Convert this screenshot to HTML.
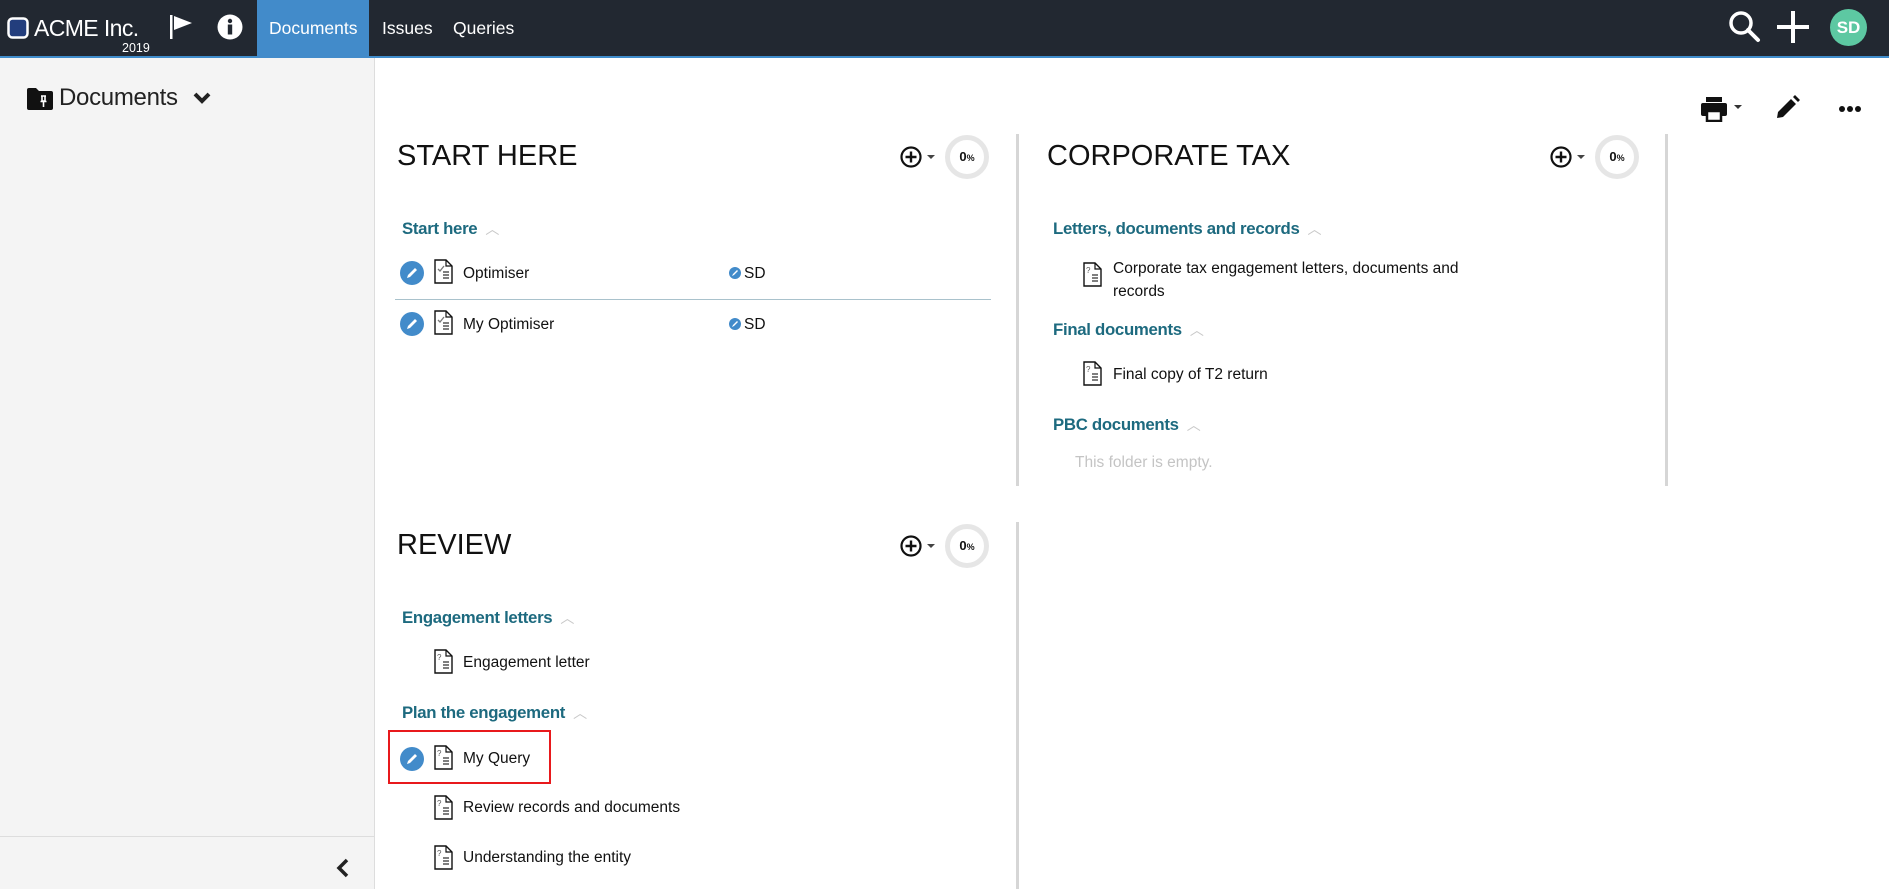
<!DOCTYPE html>
<html><head><meta charset="utf-8"><style>
*{margin:0;padding:0;box-sizing:border-box}
body{width:1889px;height:889px;overflow:hidden;font-family:"Liberation Sans",sans-serif;background:#fff;position:relative;color:#111}
.a{position:absolute;white-space:nowrap}
.nav{position:absolute;left:0;top:0;width:1889px;height:58px;background:#222831;border-bottom:2px solid #3f8ccb}
.side{position:absolute;left:0;top:58px;width:375px;height:831px;background:#f4f4f4;border-right:1px solid #ddd}
.h1{font-size:29px;color:#111;letter-spacing:0px}
.sec{font-size:16.8px;color:#1d6a7f;font-weight:bold;letter-spacing:-0.3px}
.sec .car{color:#c8c8c8;font-weight:normal;font-size:14px;margin-left:8px}
.it{font-size:15.5px;color:#111}
.vd{position:absolute;width:3px;background:#d6d6d6}
.prog{position:absolute;width:44px;height:44px;border-radius:50%;border:5px solid #e6e6e6;font-size:13px;font-weight:bold;text-align:center;line-height:34px}
.prog small{font-size:9px}
</style></head><body>
<div class="nav"></div>
<svg class="a" style="left:7px;top:17px" width="22" height="22"><rect x="1.5" y="1.5" width="19" height="19" rx="4" fill="#233e7d" stroke="#fff" stroke-width="2.5"/></svg>
<div class="a" style="left:34px;top:15px;font-size:23px;color:#fff;letter-spacing:-0.6px">ACME Inc.</div>
<div class="a" style="left:122px;top:41px;font-size:12.5px;color:#fff">2019</div>
<svg class="a" style="left:170px;top:13px" width="24" height="28"><rect x="0" y="2" width="2.5" height="24" fill="#fff"/><path d="M4 3 L22 10 L4 17Z" fill="#fff"/></svg>
<svg class="a" style="left:217px;top:14px" width="26" height="26"><circle cx="13" cy="13" r="12.5" fill="#fff"/><circle cx="13" cy="7" r="2.2" fill="#222831"/><rect x="10.8" y="10.5" width="4.4" height="10" fill="#222831"/></svg>
<div class="a" style="left:257px;top:0;width:112px;height:58px;background:#428bca"></div>
<div class="a" style="left:269px;top:18px;font-size:17.5px;color:#fff">Documents</div>
<div class="a" style="left:382px;top:18px;font-size:17.5px;color:#fff">Issues</div>
<div class="a" style="left:453px;top:18px;font-size:17.5px;color:#fff">Queries</div>
<svg class="a" style="left:1728px;top:10px" width="34" height="34"><circle cx="13" cy="13" r="10" fill="none" stroke="#fff" stroke-width="3.5"/><path d="M20 20 L30 30" stroke="#fff" stroke-width="4" stroke-linecap="round"/></svg>
<svg class="a" style="left:1777px;top:11px" width="32" height="32"><rect x="14" y="0" width="4" height="32" fill="#fff"/><rect x="0" y="14" width="32" height="4" fill="#fff"/></svg>
<div class="a" style="left:1830px;top:9px;width:37px;height:37px;border-radius:50%;background:#5dc8a2;color:#fff;font-weight:bold;font-size:17px;text-align:center;line-height:37px">SD</div>

<div class="side"></div>
<svg class="a" style="left:27px;top:88px" width="26" height="22"><path d="M0 2 Q0 0 2 0 L9 0 L12 3 L24 3 Q26 3 26 5 L26 20 Q26 22 24 22 L2 22 Q0 22 0 20Z" fill="#111"/><path d="M14 8 L19 8 M15 8 L15 13 L18 13 L18 8 M13.5 13.5 L19.5 13.5 M16.5 13.5 L16.5 19" stroke="#fff" stroke-width="1.6" fill="none"/></svg>
<div class="a" style="left:59px;top:84px;font-size:24px;color:#222;letter-spacing:-0.3px">Documents</div>
<svg class="a" style="left:193px;top:91px" width="18" height="14"><path d="M2 3 L9 10 L16 3" stroke="#222" stroke-width="4" fill="none"/></svg>
<div class="a" style="left:0;top:836px;width:375px;height:1px;background:#ddd"></div>
<svg class="a" style="left:336px;top:858px" width="14" height="20"><path d="M11 2 L3 10 L11 18" stroke="#222" stroke-width="3.5" fill="none"/></svg>

<svg class="a" style="left:1700px;top:96px" width="44" height="26"><rect x="6" y="1" width="16" height="5" fill="#111"/><rect x="1" y="7" width="26" height="13" rx="2" fill="#111"/><rect x="7" y="15" width="14" height="10" fill="#fff" stroke="#111" stroke-width="2.5"/><path d="M34 9 L42 9 L38 13Z" fill="#333"/></svg>
<svg class="a" style="left:1774px;top:95px" width="26" height="26"><path d="M3 23 L4 17 L17 4 L22 9 L9 22Z M19 2 L21 0 L26 5 L24 7Z" fill="#111"/></svg>
<svg class="a" style="left:1838px;top:105px" width="24" height="8"><circle cx="4" cy="4" r="3" fill="#111"/><circle cx="12" cy="4" r="3" fill="#111"/><circle cx="20" cy="4" r="3" fill="#111"/></svg>

<div class="vd" style="left:1016px;top:134px;height:352px"></div>
<div class="vd" style="left:1665px;top:134px;height:352px"></div>
<div class="vd" style="left:1016px;top:522px;height:367px"></div>

<div class="a h1" style="left:397px;top:140px">START HERE</div>
<div class="a h1" style="left:1047px;top:140px">CORPORATE TAX</div>
<div class="a h1" style="left:397px;top:529px">REVIEW</div>

<svg style="display:none"><defs>
<g id="pc"><circle cx="11" cy="11" r="9.5" fill="none" stroke="#111" stroke-width="2.2"/><path d="M11 5.5 V16.5 M5.5 11 H16.5" stroke="#111" stroke-width="2.4"/><path d="M27 9 L35 9 L31 13Z" fill="#444"/></g>
<g id="doc"><path d="M1 1 H12 L18 7 V24 H1Z" fill="#fff" stroke="#111" stroke-width="1.4"/><path d="M12 1 V7 H18" fill="none" stroke="#111" stroke-width="1.2"/><path d="M9 13 H15 M9 16 H15 M9 19 H15" stroke="#333" stroke-width="1.3"/></g>
<g id="ed"><circle cx="12" cy="12" r="12" fill="#428bca"/><path d="M7 17 L8 14 L15 7 L17 9 L10 16Z" fill="#fff"/></g>
</defs></svg>

<svg class="a" style="left:900px;top:146px" width="40" height="22"><use href="#pc"/></svg>
<div class="prog" style="left:945px;top:135px">0<small>%</small></div>
<svg class="a" style="left:1550px;top:146px" width="40" height="22"><use href="#pc"/></svg>
<div class="prog" style="left:1595px;top:135px">0<small>%</small></div>
<svg class="a" style="left:900px;top:535px" width="40" height="22"><use href="#pc"/></svg>
<div class="prog" style="left:945px;top:524px">0<small>%</small></div>

<div class="a sec" style="left:402px;top:219px">Start here<span class="car">︿</span></div>
<svg class="a" style="left:400px;top:261px" width="24" height="24"><use href="#ed"/></svg>
<svg class="a" style="left:434px;top:259px" width="20" height="26"><use href="#doc"/><path d="M4 10 L6 12 L10 7" stroke="#777" stroke-width="1.3" fill="none"/></svg>
<div class="a it" style="left:463px;top:265px">Optimiser</div>
<svg class="a" style="left:729px;top:267px" width="12" height="12"><circle cx="6" cy="6" r="6" fill="#428bca"/><path d="M3 9 L4 7 L8 3 L9 4 L5 8Z" fill="#fff"/></svg>
<div class="a it" style="left:744px;top:265px">SD</div>
<div class="a" style="left:395px;top:299px;width:596px;height:1px;background:#a9c2cc"></div>
<svg class="a" style="left:400px;top:312px" width="24" height="24"><use href="#ed"/></svg>
<svg class="a" style="left:434px;top:310px" width="20" height="26"><use href="#doc"/><path d="M4 10 L6 12 L10 7" stroke="#777" stroke-width="1.3" fill="none"/></svg>
<div class="a it" style="left:463px;top:316px">My Optimiser</div>
<svg class="a" style="left:729px;top:318px" width="12" height="12"><circle cx="6" cy="6" r="6" fill="#428bca"/><path d="M3 9 L4 7 L8 3 L9 4 L5 8Z" fill="#fff"/></svg>
<div class="a it" style="left:744px;top:316px">SD</div>

<div class="a sec" style="left:1053px;top:219px">Letters, documents and records<span class="car">︿</span></div>
<svg class="a" style="left:1083px;top:262px" width="20" height="26"><use href="#doc"/><text x="3" y="11" font-size="8" fill="#555" font-family="Liberation Sans">?</text></svg>
<div class="a it" style="left:1113px;top:257px;line-height:23px">Corporate tax engagement letters, documents and<br>records</div>
<div class="a sec" style="left:1053px;top:320px">Final documents<span class="car">︿</span></div>
<svg class="a" style="left:1083px;top:361px" width="20" height="26"><use href="#doc"/><text x="3" y="11" font-size="8" fill="#555" font-family="Liberation Sans">?</text></svg>
<div class="a it" style="left:1113px;top:366px">Final copy of T2 return</div>
<div class="a sec" style="left:1053px;top:415px">PBC documents<span class="car">︿</span></div>
<div class="a it" style="left:1075px;top:454px;color:#c4c4c4">This folder is empty.</div>

<div class="a sec" style="left:402px;top:608px">Engagement letters<span class="car">︿</span></div>
<svg class="a" style="left:434px;top:649px" width="20" height="26"><use href="#doc"/><text x="3" y="11" font-size="8" fill="#555" font-family="Liberation Sans">?</text></svg>
<div class="a it" style="left:463px;top:654px">Engagement letter</div>
<div class="a sec" style="left:402px;top:703px">Plan the engagement<span class="car">︿</span></div>
<div class="a" style="left:388px;top:730px;width:163px;height:54px;border:2px solid #e8191c"></div>
<svg class="a" style="left:400px;top:747px" width="24" height="24"><use href="#ed"/></svg>
<svg class="a" style="left:434px;top:745px" width="20" height="26"><use href="#doc"/><text x="3" y="11" font-size="8" fill="#555" font-family="Liberation Sans">?</text></svg>
<div class="a it" style="left:463px;top:750px">My Query</div>
<svg class="a" style="left:434px;top:795px" width="20" height="26"><use href="#doc"/><text x="3" y="11" font-size="8" fill="#555" font-family="Liberation Sans">?</text></svg>
<div class="a it" style="left:463px;top:799px">Review records and documents</div>
<svg class="a" style="left:434px;top:845px" width="20" height="26"><use href="#doc"/><text x="3" y="11" font-size="8" fill="#555" font-family="Liberation Sans">?</text></svg>
<div class="a it" style="left:463px;top:849px">Understanding the entity</div>
</body></html>
